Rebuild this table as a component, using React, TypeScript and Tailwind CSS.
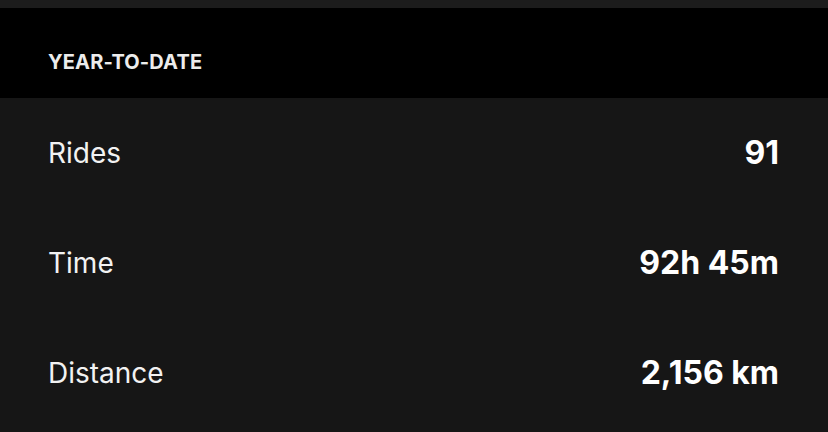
export default function App() {
  const rows = [
    { label: "Rides", value: "91" },
    { label: "Time", value: "92h 45m" },
    { label: "Distance", value: "2,156 km" },
  ];
  return (
    <div
      className="w-[828px] h-[432px] overflow-hidden bg-[#161616] flex flex-col"
      style={{ fontFamily: "Inter, 'Noto Sans', sans-serif" }}
    >
      <div className="h-[8px] bg-[#1c1c1c]" />
      <div className="h-[90px] bg-black flex items-center px-[48px] pt-[18px]">
        <span className="text-[20px] font-bold text-[#ececec] leading-none tracking-[0.15px]">YEAR-TO-DATE</span>
      </div>
      <div className="flex flex-col">
        {rows.map((r) => (
          <div key={r.label} className="h-[110px] flex items-center justify-between pl-[48px] pr-[49px]">
            <span className="text-[28px] text-[#f2f2f2] leading-none">{r.label}</span>
            <span className="text-[32px] font-bold text-white leading-none">{r.value}</span>
          </div>
        ))}
      </div>
    </div>
  );
}
